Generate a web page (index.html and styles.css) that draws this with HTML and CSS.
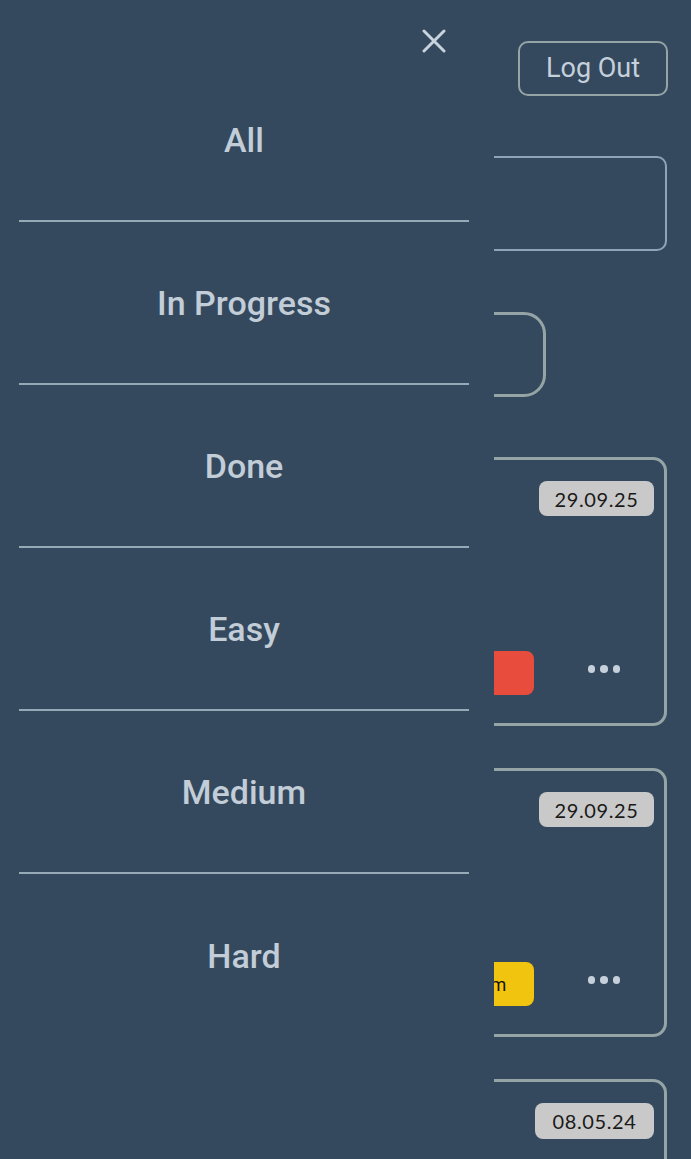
FILE: index.html
```html
<!DOCTYPE html>
<html lang="en">
<head>
<meta charset="utf-8">
<title>Tasks</title>
<link rel="stylesheet" href="styles.css">
</head>
<body>
<div class="page">
  <header class="topbar">
    <h1 class="greeting">My Tasks</h1>
    <button class="logout">Log Out</button>
  </header>
  <div class="search"><input class="search-input" type="text" placeholder="Search tasks"></div>
  <button class="filter-btn">Filter</button>
  <ul class="cards">
    <li class="card">
      <div class="card-head"><h2 class="card-title">Finish report</h2><span class="date">29.09.25</span></div>
      <p class="card-desc">Write the final version of the quarterly report.</p>
      <div class="card-foot"><span class="tag tag-hard">Hard</span><button class="more"><i></i><i></i><i></i></button></div>
    </li>
    <li class="card">
      <div class="card-head"><h2 class="card-title">Buy groceries</h2><span class="date">29.09.25</span></div>
      <p class="card-desc">Milk, bread, eggs and vegetables.</p>
      <div class="card-foot"><span class="tag tag-medium">Medium</span><button class="more"><i></i><i></i><i></i></button></div>
    </li>
    <li class="card">
      <div class="card-head"><h2 class="card-title">Call the bank</h2><span class="date date-wide">08.05.24</span></div>
      <p class="card-desc">Ask about the account.</p>
      <div class="card-foot"><span class="tag tag-easy">Easy</span><button class="more"><i></i><i></i><i></i></button></div>
    </li>
  </ul>
</div>

<nav class="drawer">
  <button class="close" aria-label="Close">
    <svg width="24" height="24" viewBox="0 0 24 24"><path d="M2 2 L22 22 M22 2 L2 22" stroke="#c9d3dd" stroke-width="3" stroke-linecap="round"/></svg>
  </button>
  <ul class="menu">
    <li class="menu-item">All</li>
    <li class="menu-item">In Progress</li>
    <li class="menu-item">Done</li>
    <li class="menu-item">Easy</li>
    <li class="menu-item">Medium</li>
    <li class="menu-item">Hard</li>
  </ul>
</nav>
</body>
</html>
```

FILE: styles.css
```css
* { box-sizing: border-box; }
html, body {
  margin: 0;
  padding: 0;
  background: #34495e;
  font-family: Roboto, "Open Sans", "DejaVu Sans", sans-serif;
  color: #c5d0db;
}
.page {
  padding: 41px 24px 0 24px;
  display: flex;
  flex-direction: column;
}
.topbar {
  display: flex;
  justify-content: space-between;
  align-items: center;
  height: 55px;
}
.greeting {
  margin: 0;
  font-size: 28px;
  font-weight: 500;
}
.logout {
  width: 150px;
  height: 55px;
  margin-right: -1px;
  background: transparent;
  border: 2px solid #95a5a6;
  border-radius: 10px;
  color: #c5d0db;
  font-family: inherit;
  font-weight: 400;
  font-size: 27px;
  padding: 0 0 2px 0;
}
.search { margin-top: 60px; }
.search-input {
  width: 100%;
  height: 95px;
  background: transparent;
  border: 2px solid #8fa3b9;
  border-radius: 10px;
}
.filter-btn {
  margin-top: 61px;
  width: 522px;
  height: 85px;
  background: transparent;
  border: 3px solid #95a5a6;
  border-radius: 22px;
  color: #c5d0db;
  font-size: 24px;
}
.cards {
  list-style: none;
  margin: 60px 0 0 0;
  padding: 0;
  display: flex;
  flex-direction: column;
  gap: 42px;
}
.card {
  border: 3px solid #95a5a6;
  border-radius: 14px;
  padding: 21px 10px 28px 24px;
  display: flex;
  flex-direction: column;
  height: 269px;
}
.card-head {
  display: flex;
  justify-content: space-between;
  align-items: center;
  height: 35px;
}
.card-title { margin: 0; font-size: 22px; }
.date {
  background: #c9c9c9;
  color: #1a1a1a;
  border-radius: 8px;
  height: 35px;
  width: 115px;
  display: flex;
  align-items: center;
  justify-content: center;
  font-family: "Lato", "Open Sans", sans-serif;
  font-size: 20px;
  letter-spacing: 0.6px;
}
.date-wide { width: 119px; height: 36px; }
.card-desc {
  margin: 0;
  flex: 1;
  padding-top: 20px;
  font-size: 18px;
}
.card-foot {
  display: flex;
  justify-content: space-between;
  align-items: center;
  height: 44px;
  padding-right: 34px;
}
.tag {
  height: 44px;
  width: 120px;
  border-radius: 8px;
  display: flex;
  align-items: center;
  justify-content: center;
  color: #111;
  font-size: 18px;
  margin-left: auto;
  margin-right: 54px;
}
.tag-hard { background: #e74c3c; }
.tag-medium { background: #f1c40f; }
.tag-easy { background: #2ecc71; }
.more {
  background: transparent;
  border: 0;
  padding: 0;
  margin-bottom: 8px;
  display: flex;
  gap: 5px;
}
.more i {
  width: 7.5px;
  height: 7.5px;
  border-radius: 50%;
  background: #c5d0db;
  display: block;
}

.drawer {
  position: fixed;
  top: 0;
  left: 0;
  bottom: 0;
  width: 494px;
  background: #34495e;
  padding: 59px 25px 0 19px;
}
.close {
  position: absolute;
  top: 29px;
  left: 422px;
  width: 24px;
  height: 24px;
  padding: 0;
  border: 0;
  background: transparent;
  display: flex;
}
.menu {
  list-style: none;
  margin: 0;
  padding: 0;
}
.menu-item {
  height: 163px;
  display: flex;
  align-items: center;
  justify-content: center;
  border-bottom: 2px solid #96a9b6;
  font-size: 34px;
  font-weight: 500;
  color: #c2cdd8;
  padding-top: 1px;
}
.menu-item:last-child { border-bottom: 0; }
```
